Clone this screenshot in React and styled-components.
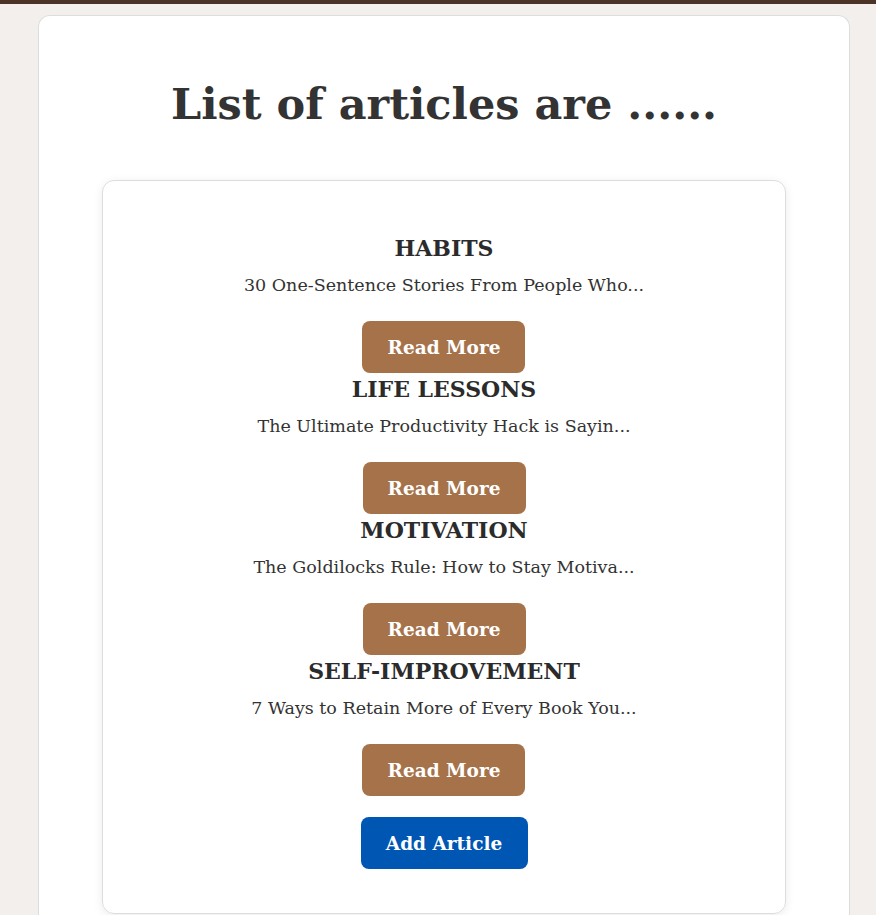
import React from 'react';
import styled, { createGlobalStyle } from 'styled-components';

const articles = [
  { topic: 'HABITS', title: '30 One-Sentence Stories From People Who...' },
  { topic: 'LIFE LESSONS', title: 'The Ultimate Productivity Hack is Sayin...' },
  { topic: 'MOTIVATION', title: 'The Goldilocks Rule: How to Stay Motiva...' },
  { topic: 'SELF-IMPROVEMENT', title: '7 Ways to Retain More of Every Book You...' },
];

const GlobalStyle = createGlobalStyle`
  html, body {
    margin: 0;
    padding: 0;
    background: #f3efec;
    font-family: "DejaVu Serif", Georgia, serif;
    color: #333;
  }
`;

const TopBar = styled.div`
  height: 4px;
  background: #4b3427;
`;

const Page = styled.main`
  padding: 11px 26px 0 38px;
`;

const Panel = styled.section`
  background: #fff;
  border: 1px solid #ddd;
  border-bottom: none;
  border-radius: 12px 12px 0 0;
  padding: 0 63px;
  min-height: 920px;
`;

const Heading = styled.h1`
  margin: 0;
  padding: 59px 0 47px;
  text-align: center;
  font-size: 43px;
  line-height: 58px;
  font-weight: bold;
  color: #333;
`;

const ListCard = styled.div`
  border: 1px solid #ddd;
  border-radius: 12px;
  box-shadow: 0 2px 10px rgba(0, 0, 0, 0.08);
  padding: 54px 20px 44px;
  display: flex;
  flex-direction: column;
  align-items: center;
`;

const Item = styled.article`
  display: flex;
  flex-direction: column;
  align-items: center;
  margin-bottom: 3px;
`;

const Topic = styled.h3`
  margin: 0 0 12px;
  font-size: 22px;
  line-height: 26px;
  font-weight: bold;
  color: #2b2b2b;
`;

const Summary = styled.p`
  margin: 0 0 24px;
  font-size: 17.5px;
  line-height: 24px;
  color: #333;
`;

const Button = styled.button`
  height: 52px;
  min-width: ${p => p.$width}px;
  padding: 0 20px;
  border: none;
  border-radius: 8px;
  background: ${p => p.$color};
  color: #fff;
  font-family: inherit;
  font-size: 18.5px;
  font-weight: bold;
  cursor: pointer;
`;

const AddButton = styled(Button)`
  margin-top: 18px;
`;

export default function App() {
  return (
    <>
      <GlobalStyle />
      <TopBar />
      <Page>
        <Panel>
          <Heading>List of articles are ......</Heading>
          <ListCard>
            {articles.map(a => (
              <Item key={a.topic}>
                <Topic>{a.topic}</Topic>
                <Summary>{a.title}</Summary>
                <Button $color="#a6724a" $width={163}>Read More</Button>
              </Item>
            ))}
            <AddButton $color="#0056b3" $width={167}>Add Article</AddButton>
          </ListCard>
        </Panel>
      </Page>
    </>
  );
}
